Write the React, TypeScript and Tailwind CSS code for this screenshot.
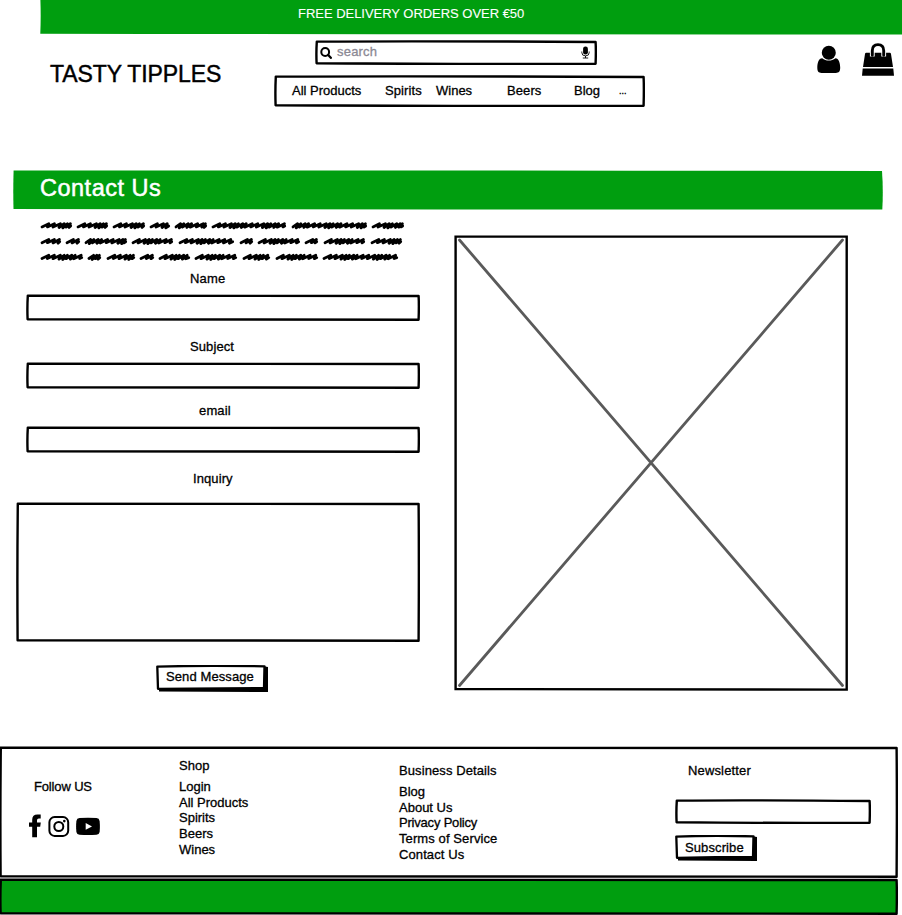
import React from "react";
import type { ReactNode } from "react";

type SketchProps = {
  w: number;
  h: number;
  className?: string;
  fill?: string;
  stroke?: string;
  strokeWidth?: number;
  children?: ReactNode;
};

/* A box with a hand-drawn outline: each side bows by a fraction of a pixel. */
function SketchBox({ w, h, className = "", fill = "#fff", stroke = "#000", strokeWidth = 2.4, children }: SketchProps) {
  const r = w - 1.4;
  const b = h - 1.3;
  const d = `M1.8 1.6 Q${w * 0.4} 0.9 ${r} 2 Q${w - 0.9} ${h * 0.4} ${r} ${b} Q${w * 0.55} ${h - 0.7} 1.6 ${b - 0.5} Q1.1 ${h * 0.5} 1.8 1.6 Z`;
  return (
    <div className={`relative shrink-0 ${className}`}>
      <svg className="absolute inset-0 h-full w-full" viewBox={`0 0 ${w} ${h}`} preserveAspectRatio="none" aria-hidden="true">
        <path d={d} fill={fill} stroke={stroke} strokeWidth={strokeWidth} strokeLinejoin="round" />
      </svg>
      <div className="relative flex h-full items-center">{children}</div>
    </div>
  );
}

function SketchButton({ w, h, className, children }: { w: number; h: number; className: string; children: ReactNode }) {
  return (
    <button className={`relative block shrink-0 text-left ${className}`}>
      <svg className="absolute inset-0 h-full w-full" viewBox={`0 0 ${w} ${h}`} aria-hidden="true">
        <path d={`M3 4 L${w - 3} 1.5 L${w} 2 V${h} L3 ${h - 0.4} Z`} fill="#000" />
        <path d={`M1.3 1.6 Q${w * 0.4} 0.4 ${w - 3.5} 1.3 L${w - 4} ${h - 4} Q${w * 0.5} ${h - 3.8} 2 ${h - 3.2} Z`} fill="#fff" stroke="#000" strokeWidth="2.3" strokeLinejoin="round" />
      </svg>
      <span className="relative">{children}</span>
    </button>
  );
}

const scribbles: [number, number][][] = [
  [[41, 72], [77, 108], [113, 145], [150, 170], [175, 207], [212, 286], [292, 367], [372, 404]],
  [[41, 61], [66, 80], [85, 127], [132, 173], [179, 234], [240, 253], [258, 300], [305, 318], [324, 365], [371, 402]],
  [[41, 83], [88, 101], [107, 135], [140, 154], [159, 190], [195, 237], [243, 270], [276, 318], [323, 398]],
];

const strides = [6, 5.6, 6, 3.8, 3.2, 4.4, 3.4];
const dips = [1.2, 1.4, 1.8, 2.2, 1.4, 1.8, 1.5];

/* Alternates open and tight loops so that a word looks scrawled. */
function scribblePath(start: number, end: number, y: number) {
  const last = end - 2.4;
  let i = start % 3 === 2 ? 0 : start % 3 === 1 ? 3 : 1;
  let x = start + 1;
  let d = `M${x} ${y + 1.2}`;
  while (x < last - 2) {
    const next = Math.min(x + strides[i % 7], last);
    d += ` L${next + 0.8} ${y - 2} L${next - 0.6} ${y + dips[i % 7]}`;
    x = next;
    i += 1;
  }
  return `${d} L${end - 1.3} ${y + 0.3}`;
}

function Scribbles() {
  return (
    <svg className="block h-[48px] w-[368px]" viewBox="39 217 368 48" aria-hidden="true">
      {scribbles.map((line, i) =>
        line.map(([a, b]) => (
          <path key={`${i}-${a}`} d={scribblePath(a, b, 225.7 + i * 15.8)} fill="none" stroke="#000" strokeWidth="2.8" strokeLinecap="round" strokeLinejoin="round" />
        )),
      )}
    </svg>
  );
}

function UserIcon() {
  return (
    <svg className="h-[29px] w-[25px]" viewBox="0 0 25 29">
      <path d="M6.2 13.2 C2.6 13.2 1.3 18 1.3 22.6 C1.3 26.4 2.6 28 5.5 28 H19.9 C22.9 28 24.2 26.4 24.2 22.6 C24.2 18 22.7 13.2 19.5 13.2 C15.5 16.4 10 16.4 6.2 13.2Z" />
      <circle cx="12.8" cy="7.7" r="7" />
    </svg>
  );
}

function BagIcon() {
  return (
    <svg className="h-[34px] w-[34px]" viewBox="0 0 34 34">
      <path d="M4 12 Q4.2 10.8 5.2 10.8 H28.8 Q29.8 10.8 30 12 L32 25 H2Z M1.7 26.6 H32.3 L33 33.8 H1Z" />
      <path d="M11.3 14.6 V8.7 Q11.3 2.6 17 2.6 Q22.7 2.6 22.7 8.7 V14.6" fill="none" stroke="#fff" strokeWidth="4.8" />
      <path d="M11.3 13.2 V8.7 Q11.3 2.6 17 2.6 Q22.7 2.6 22.7 8.7 V13.2" fill="none" stroke="#000" strokeWidth="2.9" strokeLinecap="round" />
    </svg>
  );
}

function Socials() {
  return (
    <div className="flex h-[24px] items-start">
      <svg className="h-[24px] w-[13px]" viewBox="0 0 13 24">
        <path d="M12.7 .4 V4.6 H10.8 Q9 4.6 9 6.2 V8.5 H12.8 L12.2 12.8 H9 V23.2 H4.2 V12.8 H1 V8.5 H4.2 V5.8 Q4.2 .4 9.5 .4Z" />
      </svg>
      <svg className="ml-[7px] h-[24px] w-[22px]" viewBox="0 0 22 24" fill="none" stroke="#000" strokeWidth="2">
        <rect x="1.4" y="3.1" width="18.8" height="18.8" rx="5.2" />
        <circle cx="10.8" cy="12.5" r="4.5" />
        <circle cx="16.3" cy="7.1" r="1.3" fill="#000" stroke="none" />
      </svg>
      <svg className="ml-[6px] h-[24px] w-[24px]" viewBox="0 0 24 24">
        <path d="M3.5 4.1 Q12 3.5 20.5 4.1 Q23.2 4.3 23.6 7 Q24.2 12.5 23.6 18 Q23.2 20.6 20.5 20.8 Q12 21.4 3.5 20.8 Q.8 20.6 .4 18 Q-.2 12.5 .4 7 Q.8 4.3 3.5 4.1Z" />
        <path d="M9.7 9 L16 12.4 L9.7 15.8Z" fill="#fff" />
      </svg>
    </div>
  );
}

function Field({ label, labelClass }: { label: string; labelClass: string }) {
  return (
    <label className="block">
      <span className={`block h-4 ${labelClass}`}>{label}</span>
      <SketchBox w={394} h={27} className="mt-[7px] ml-[26px] h-[27px] w-[394px]" />
    </label>
  );
}

export default function App() {
  return (
    <div className="flex h-[915px] w-[902px] flex-col overflow-hidden bg-white text-[13px] leading-4 whitespace-nowrap text-black [font-family:'Liberation_Sans',Arial,sans-serif] [-webkit-text-stroke:0.3px_currentColor]">
      <header className="h-[170px] shrink-0">
        <div className="relative ml-[40px] h-[34px]">
          <svg className="absolute inset-0 h-full w-full overflow-visible" viewBox="0 0 862 34" preserveAspectRatio="none" aria-hidden="true">
            <path d="M.4 0 Q1 17 .3 33.7 Q430 34.6 862 34.4 V0Z" fill="#009e0f" />
          </svg>
          <p className="relative pt-[6px] pl-[258px] tracking-[-0.03px] text-white [-webkit-text-stroke:0.1px_currentColor]">FREE DELIVERY ORDERS OVER €50</p>
        </div>
        <div className="flex">
          <h1 className="w-[274px] pt-[26px] pl-[50px] text-[23px] leading-7 tracking-[-0.1px] [-webkit-text-stroke:0.45px_currentColor]">TASTY TIPPLES</h1>
          <div className="w-[542px] pt-[6px]">
            <SketchBox w={282} h={25} className="ml-[41px] h-[25px] w-[282px]">
              <svg className="ml-[5px] h-[12px] w-[12px]" viewBox="0 0 12 12" fill="none" stroke="#000" strokeLinecap="round">
                <circle cx="5.2" cy="5" r="3.9" strokeWidth="2" />
                <path d="M8.2 8 L10.8 10.8" strokeWidth="2.3" />
              </svg>
              <span className="ml-[5px] pb-[1px] tracking-[0.2px] text-[#8b8994]">search</span>
              <svg className="ml-auto mr-[7px] h-[13px] w-[9px]" viewBox="0 0 9 13">
                <rect x="2.1" y=".5" width="4.8" height="8" rx="2.3" />
                <path d="M.8 5.5 V6.6 Q.8 9.9 4.5 9.9 Q8.2 9.9 8.2 6.6 V5.5 M4.5 10 V12 M1.8 12 H7.2" fill="none" stroke="#000" strokeWidth=".9" />
              </svg>
            </SketchBox>
            <SketchBox w={371} h={32} className="mt-[10px] h-[32px] w-[371px]">
              <nav className="flex w-full pl-[18px]">
                <a className="w-[93px]">All Products</a>
                <a className="w-[51px] tracking-[0.1px]">Spirits</a>
                <a className="w-[71px]">Wines</a>
                <a className="w-[67px] tracking-[0.1px]">Beers</a>
                <a className="w-[45px]">Blog</a>
                <a className="text-[9px]">...</a>
              </nav>
            </SketchBox>
          </div>
          <div className="flex pt-[11px]">
            <UserIcon />
            <div className="-mt-[3px] ml-[20px]"><BagIcon /></div>
          </div>
        </div>
      </header>

      <div className="relative ml-[13px] h-[40px] w-[871px] shrink-0">
        <svg className="absolute inset-0 h-full w-full" viewBox="0 0 871 40" aria-hidden="true">
          <path d="M.6 .5 Q350 .1 869 1 Q870.4 20 869.3 39.6 Q400 39.6 .5 39 Q0 20 .6 .5Z" fill="#009e0f" />
        </svg>
        <h2 className="relative pt-[4px] pl-[27px] text-[23.5px] leading-7 tracking-[0.5px] text-white [-webkit-text-stroke:0.5px_currentColor]">Contact Us</h2>
      </div>

      <main className="flex h-[536px] shrink-0">
        <form className="w-[454px]">
          <div className="pt-[7px] pl-[39px]"><Scribbles /></div>
          <div className="pt-[6px]"><Field label="Name" labelClass="pl-[190px] tracking-[0.15px]" /></div>
          <div className="pt-[18px]"><Field label="Subject" labelClass="pl-[190px] tracking-[0.1px]" /></div>
          <div className="pt-[14px]"><Field label="email" labelClass="pl-[199px] tracking-[0.15px]" /></div>
          <label className="block pt-[18px]">
            <span className="block h-4 pl-[193px] tracking-[0.1px]">Inquiry</span>
            <SketchBox w={404} h={140} className="mt-[15px] ml-[16px] h-[140px] w-[404px]" />
          </label>
          <SketchButton w={112} h={27} className="mt-[23px] ml-[156px] h-[27px] w-[112px] pb-[3px] pl-[10px] tracking-[0.1px]">Send Message</SketchButton>
        </form>
        <svg className="mt-[25px] h-[456px] w-[394px]" viewBox="0 0 394 456">
          <path d="M1.6 1.6 Q160 1.2 392.7 1.6 V454.6 Q200 454.6 1.6 454 Q2.2 220 1.6 1.6Z" fill="#fff" stroke="#000" strokeWidth="2.4" />
          <path d="M5.5 5 L388.5 450.5 M388.5 5 L5.5 450.5" fill="none" stroke="#5a5a5a" strokeWidth="2.8" strokeLinecap="round" />
        </svg>
      </main>

      <footer className="-ml-px shrink-0">
        <SketchBox w={899} h={132} className="h-[132px] w-[899px]">
          <div className="flex h-full w-full items-start pl-px">
            <section className="w-[179px] pt-[33px]">
              <h3 className="pl-[34px] tracking-[-0.15px]">Follow US</h3>
              <div className="mt-[19px] pl-[28px]"><Socials /></div>
            </section>
            <section className="w-[220px] pt-[12px]">
              <h3>Shop</h3>
              <ul className="mt-[5px] leading-[15.7px]">
                <li>Login</li><li>All Products</li><li>Spirits</li><li>Beers</li><li>Wines</li>
              </ul>
            </section>
            <section className="w-[276px] pt-[17px]">
              <h3 className="tracking-[0.1px]">Business Details</h3>
              <ul className="mt-[5px] leading-[15.7px]">
                <li>Blog</li><li>About Us</li><li className="tracking-[-0.2px]">Privacy Policy</li><li className="tracking-[0.1px]">Terms of Service</li><li className="tracking-[0.1px]">Contact Us</li>
              </ul>
            </section>
            <section className="pt-[17px]">
              <h3 className="pl-[13px] tracking-[0.15px]">Newsletter</h3>
              <SketchBox w={196} h={25} className="mt-[20px] h-[25px] w-[196px]" />
              <SketchButton w={82} h={26} className="mt-[11px] h-[26px] w-[82px] pb-px pl-[10px] tracking-[0.1px]">Subscribe</SketchButton>
            </section>
          </div>
        </SketchBox>
        <SketchBox w={899} h={37} fill="#009e0f" className="h-[37px] w-[899px]" />
      </footer>
    </div>
  );
}
